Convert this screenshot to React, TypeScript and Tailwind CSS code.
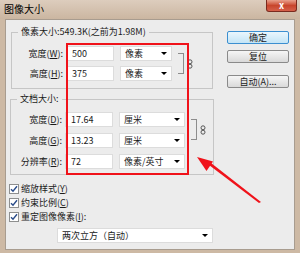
import React from "react";

const font = "font-['Noto_Sans_CJK_SC',sans-serif]";

function Mn({ c }: { c: string }) {
  return <span className="underline underline-offset-1">{c}</span>;
}

function Select({ text, w }: { text: string; w: string }) {
  return (
    <div
      className={`${w} h-[15px] bg-white border border-[#dcdcdc] flex items-center justify-between pl-[4px] pr-[4px]`}
    >
      <span>{text}</span>
      <span className="w-0 h-0 border-l-[3px] border-r-[3px] border-t-[3px] border-l-transparent border-r-transparent border-t-black" />
    </div>
  );
}

function Row({ label, value, unit, selW }: { label: React.ReactNode; value: string; unit: string; selW: string }) {
  return (
    <div className="flex items-center h-[15px]">
      <div className="w-[52px] text-right pr-[1px]">{label}</div>
      <div className="ml-[2px] w-[48px] h-[15px] bg-white border border-[#dcdcdc] flex items-center pl-[5px]">
        {value}
      </div>
      <div className="ml-[6px]">
        <Select text={unit} w={selW} />
      </div>
    </div>
  );
}

function Chain() {
  return (
    <svg width="6" height="10" viewBox="0 0 6 10" className="ml-[3px]">
      <ellipse cx="3" cy="2.8" rx="2" ry="2" fill="none" stroke="#555" strokeWidth="1" />
      <ellipse cx="3" cy="7.2" rx="2" ry="2" fill="none" stroke="#555" strokeWidth="1" />
    </svg>
  );
}

function Check({ children }: { children: React.ReactNode }) {
  return (
    <div className="flex items-center h-[13px] gap-[2px]">
      <div className="w-[10px] h-[10px] bg-white border border-[#8e8f8f] flex items-center justify-center">
        <svg width="8" height="8" viewBox="0 0 8 8">
          <path d="M1 4.2 L3 6.3 L7 1.3" fill="none" stroke="#2a4c8a" strokeWidth="1.4" />
        </svg>
      </div>
      <span>{children}</span>
    </div>
  );
}

function Btn({ children, primary }: { children: React.ReactNode; primary?: boolean }) {
  return (
    <div
      className={`w-[62px] h-[13px] rounded-[2px] flex items-center justify-center border ${
        primary
          ? "border-[#3c8fd0] bg-gradient-to-b from-[#eaf6fd] to-[#c4e5f6]"
          : "border-[#8a8a8a] bg-gradient-to-b from-[#f6f6f6] to-[#d9d9d9]"
      }`}
    >
      {children}
    </div>
  );
}

export default function App() {
  return (
    <div className={`${font} relative w-[300px] h-[253px] overflow-hidden text-[9px] leading-[12px] text-[#1b1b1b] bg-[#cdb9a4] flex flex-col`}>
      {/* title bar */}
      <div className="h-[19px] bg-gradient-to-b from-[#ddcdbd] to-[#cbb6a1] flex items-start justify-between">
        <span className="ml-[4px] mt-[3px] text-[10px] leading-[12px] text-black">图像大小</span>
        <div className="mr-[3px] w-[31px] h-[12px] rounded-b-[3px] border border-t-0 border-[#7a2a1e] bg-gradient-to-b from-[#e8a08c] via-[#c8452c] to-[#d6604a] flex items-center justify-center">
          <span className="text-white text-[9px] leading-[9px] font-bold">x</span>
        </div>
      </div>

      {/* dialog body */}
      <div className="mx-[5px] mb-[3px] flex-1 bg-[#ececec] border border-[#a89c8f] flex">
        <div className="w-[212px] flex flex-col pl-[4px]">
          {/* pixel size group */}
          <div className="mt-[12px] w-[202px] ml-[1px] border border-[#c6c6c6] pb-[7px]">
            <div className="-mt-[7px] ml-[6px] px-[3px] w-fit bg-[#ececec]">像素大小:549.3K(之前为1.98M)</div>
            <div className="mt-[8px] flex items-center">
              <div className="flex flex-col gap-[5px]">
                <Row label={<>宽度(<Mn c="W" />):</>} value="500" unit="像素" selW="w-[52px]" />
                <Row label={<>高度(<Mn c="H" />):</>} value="375" unit="像素" selW="w-[52px]" />
              </div>
              <div className="ml-[6px] w-[6px] h-[21px] border-t border-r border-b border-[#8c8c8c]" />
              <Chain />
            </div>
          </div>

          {/* document size group */}
          <div className="mt-[10px] w-[204px] border border-[#c6c6c6] pb-[5px]">
            <div className="-mt-[7px] ml-[6px] px-[3px] w-fit bg-[#ececec]">文档大小:</div>
            <div className="mt-[7px] flex">
              <div className="flex flex-col gap-[6px]">
                <Row label={<>宽度(<Mn c="D" />):</>} value="17.64" unit="厘米" selW="w-[66px]" />
                <Row label={<>高度(<Mn c="G" />):</>} value="13.23" unit="厘米" selW="w-[66px]" />
                <Row label={<>分辨率(<Mn c="R" />):</>} value="72" unit="像素/英寸" selW="w-[66px]" />
              </div>
              <div className="mt-[7px] flex items-center h-[21px]">
                <div className="ml-[6px] w-[6px] h-[21px] border-t border-r border-b border-[#8c8c8c]" />
                <Chain />
              </div>
            </div>
          </div>

          {/* checkboxes */}
          <div className="mt-[7px] ml-[-1px] flex flex-col gap-[1px]">
            <Check>缩放样式(<Mn c="Y" />)</Check>
            <Check>约束比例(<Mn c="C" />)</Check>
            <Check>重定图像像素(<Mn c="I" />):</Check>
          </div>

          <div className="mt-[5px] ml-[47px]">
            <Select text="两次立方（自动）" w="w-[156px]" />
          </div>
        </div>

        {/* buttons */}
        <div className="ml-[9px] mt-[11px] flex flex-col">
          <Btn primary>确定</Btn>
          <div className="mt-[6px]">
            <Btn>复位</Btn>
          </div>
          <div className="mt-[12px]">
            <Btn>自动(A)...</Btn>
          </div>
        </div>
      </div>

      {/* red annotation */}
      <div className="absolute left-[66px] top-[43px] w-[123px] h-[132px] border-2 border-[#f0121a]" />
      <svg className="absolute left-0 top-0" width="300" height="253" viewBox="0 0 300 253">
        <polygon points="197,157 213,161.5 206.5,171" fill="#f0121a" />
        <polygon points="209,165 211,163 261,202 259,203" fill="#f0121a" />
      </svg>
    </div>
  );
}
